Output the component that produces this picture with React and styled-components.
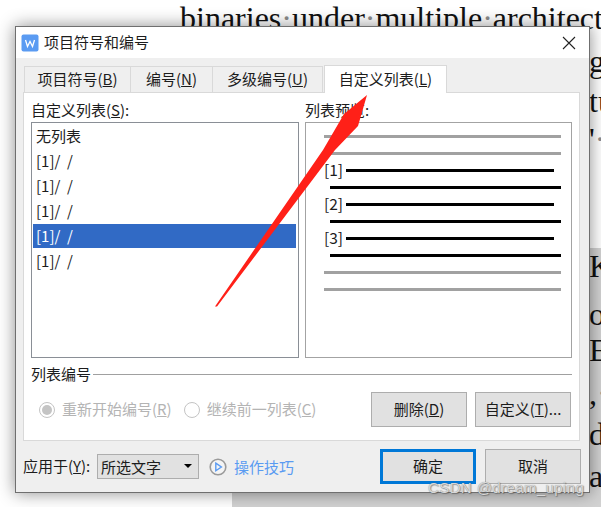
import React from 'react';
import styled, { createGlobalStyle } from 'styled-components';

const Global = createGlobalStyle`
  html, body { margin: 0; padding: 0; background: #fff; }
  * { box-sizing: border-box; }
`;

const Desktop = styled.div`
  position: relative;
  width: 601px;
  height: 507px;
  overflow: hidden;
  background: #fff;
  font-family: "Noto Sans CJK SC", "Liberation Sans", sans-serif;
  font-size: 15px;
  color: #1c1c1c;
`;

const GreyArea = styled.div`
  position: absolute;
  left: 232px;
  top: 248px;
  right: 0;
  bottom: 0;
  background: #d2d2d2;
`;

const DocText = styled.div`
  position: absolute;
  left: ${p => p.$left}px;
  top: ${p => p.$top}px;
  font-family: "Liberation Serif", serif;
  font-size: 32px;
  line-height: 34px;
  white-space: pre;
  color: #111;
`;

const Dot = styled.span`
  color: #8c8c8c;
`;

const Dialog = styled.div`
  position: absolute;
  left: 15px;
  top: 26px;
  width: 575px;
  height: 467px;
  display: flex;
  flex-direction: column;
  background: #efefef;
  border: 1px solid #6f6f6f;
  box-shadow: 0 0 16px rgba(0, 0, 0, 0.45);
`;

const TitleBar = styled.div`
  height: 31px;
  display: flex;
  align-items: center;
  padding: 0 13px 0 5px;
  background: #fff;
`;

const Title = styled.div`
  margin-left: 5px;
  padding-bottom: 2px;
  flex: 1;
`;

const Body = styled.div`
  flex: 1;
  padding: 7px 9px 0 7px;
`;

const TabStrip = styled.div`
  display: flex;
  align-items: flex-end;
  height: 28px;
  padding-left: 1px;
  position: relative;
  z-index: 1;
`;

const Tab = styled.div`
  width: ${p => p.$width}px;
  height: ${p => (p.$active ? 28 : 27)}px;
  display: flex;
  align-items: center;
  justify-content: center;
  padding-bottom: 2px;
  background: ${p => (p.$active ? '#fff' : '#efefef')};
  border: 1px solid #d9d9d9;
  border-bottom: ${p => (p.$active ? 'none' : '1px solid #d9d9d9')};
  margin-left: ${p => (p.$active ? 1 : 0)}px;
  border-left: ${p => (p.$first || p.$active ? '1px solid #d9d9d9' : 'none')};
`;

const Panel = styled.div`
  height: 349px;
  margin-top: -1px;
  padding: 0 7px;
  background: #fff;
  border: 1px solid #d9d9d9;
`;

const Columns = styled.div`
  display: grid;
  grid-template-columns: 268px 267px;
  column-gap: 6px;
  padding-top: 7px;
`;

const Column = styled.div`
  display: flex;
  flex-direction: column;
`;

const FieldLabel = styled.div`
  height: 22px;
  line-height: 20px;
`;

const ListBox = styled.div`
  height: 236px;
  display: flex;
  flex-direction: column;
  gap: 1px;
  padding: 1px 2px 0 1px;
  border: 1px solid #8a8f96;
`;

const ListRow = styled.div`
  height: 24px;
  line-height: 24px;
  padding-left: 3px;
  white-space: pre;
  background: ${p => (p.$selected ? '#316ac5' : 'transparent')};
  color: ${p => (p.$selected ? '#fff' : '#1c1c1c')};
`;

const PreviewBox = styled.div`
  height: 236px;
  padding: 5px 10px 0 18px;
  border: 1px solid #a3a3a3;
`;

const PreviewRow = styled.div`
  height: 17px;
  display: flex;
  align-items: center;
  padding-left: ${p => p.$indent || 0}px;
  padding-right: ${p => p.$trim || 0}px;
`;

const PreviewNumber = styled.span`
  width: 22px;
  flex: none;
  line-height: 15px;
  margin-bottom: 2px;
  font-size: 15.5px;
`;

const PreviewBar = styled.div`
  flex: 1;
  height: 3px;
  background: ${p => (p.$muted ? '#a1a1a1' : '#000')};
`;

const GroupHead = styled.div`
  display: flex;
  align-items: flex-start;
  gap: 2px;
  height: 18px;
  margin-top: 7px;
  line-height: 18px;
`;

const GroupRule = styled.div`
  flex: 1;
  height: 1px;
  margin-top: 9px;
  background: #a0a0a0;
`;

const GroupRow = styled.div`
  display: flex;
  align-items: center;
  height: 35px;
  margin-top: 9px;
  padding-right: 1px;
`;

const RadioItem = styled.div`
  display: flex;
  align-items: center;
  gap: 7px;
  margin-left: ${p => p.$offset}px;
  color: #b4b4b4;
`;

const RadioLabel = styled.span`
  padding-bottom: 2px;
`;

const RadioMark = styled.span`
  width: 16px;
  height: 16px;
  flex: none;
  display: flex;
  align-items: center;
  justify-content: center;
  border: 1px solid #c4c4c4;
  border-radius: 50%;
  background: #fff;
  &::after {
    content: "";
    width: 10px;
    height: 10px;
    border-radius: 50%;
    background: ${p => (p.$checked ? '#c4c4c4' : 'transparent')};
  }
`;

const ButtonRow = styled.div`
  display: flex;
  gap: 8px;
  margin-left: auto;
`;

const Button = styled.div`
  width: 96px;
  height: 35px;
  display: flex;
  align-items: center;
  justify-content: center;
  padding-bottom: 2px;
  background: #e1e1e1;
  border: ${p => (p.$primary ? '3px solid #0078d7' : '1px solid #adadad')};
`;

const Footer = styled.div`
  display: flex;
  align-items: center;
  height: 35px;
  margin: 8px -1px 0 0;
`;

const SelectLabel = styled.div`
  width: 74px;
  padding-bottom: 2px;
`;

const SelectBox = styled.div`
  width: 102px;
  height: 25px;
  display: flex;
  align-items: center;
  justify-content: space-between;
  padding: 0 6px 1px 3px;
  background: #e1e1e1;
  border: 1px solid #adadad;
`;

const Caret = styled.span`
  width: 0;
  height: 0;
  border-left: 4px solid transparent;
  border-right: 4px solid transparent;
  border-top: 4px solid #000;
`;

const TipLink = styled.div`
  display: flex;
  align-items: center;
  gap: 7px;
  margin-left: 10px;
  color: #5a9bf2;
`;

const FooterButtons = styled.div`
  display: flex;
  gap: 9px;
  margin-left: auto;
`;

const Arrow = styled.svg`
  position: absolute;
  left: 0;
  top: 0;
  pointer-events: none;
`;

const Watermark = styled.div`
  position: absolute;
  left: 428px;
  top: 478px;
  font-family: "Liberation Sans", sans-serif;
  font-size: 15px;
  line-height: 20px;
  letter-spacing: 0.4px;
  color: #d8d8d8;
  text-shadow: 0 0 1px rgba(80, 80, 80, 0.6), 1px 1px 1px rgba(70, 70, 70, 0.5);
  white-space: nowrap;
`;

const AppLogo = () => (
  <svg width="18" height="18" viewBox="0 0 18 18">
    <rect x="0.5" y="0.5" width="17" height="17" rx="2" fill="#5a9bf2" />
    <path d="M4.5 6 L6.5 12.5 L9 7.5 L11.5 12.5 L13.5 6" fill="none" stroke="#fff" strokeWidth="1.3" />
  </svg>
);

const CloseIcon = () => (
  <svg width="14" height="14" viewBox="0 0 14 14">
    <path d="M1 1 L13 13 M13 1 L1 13" stroke="#222" strokeWidth="1.1" />
  </svg>
);

const TipIcon = () => (
  <svg width="18" height="18" viewBox="0 0 18 18">
    <circle cx="9" cy="9" r="7.8" fill="#f4f4f4" stroke="#9a9a9a" strokeWidth="1.6" />
    <path d="M6.8 5.2 L12.4 9 L6.8 12.8 Z" fill="none" stroke="#5a9bf2" strokeWidth="1.4" />
  </svg>
);

const listRows = ['[1]/  /', '[1]/  /', '[1]/  /', '[1]/  /', '[1]/  /'];

export default function App() {
  return (
    <Desktop>
      <Global />
      <GreyArea />
      <DocText $left={180} $top={1}>
        binaries<Dot>·</Dot>under<Dot>·</Dot>multiple<Dot>·</Dot>architect
      </DocText>
      <DocText $left={589} $top={44}>g</DocText>
      <DocText $left={589} $top={84}>tu</DocText>
      <DocText $left={589} $top={122}>'<Dot>·</Dot></DocText>
      <DocText $left={589} $top={249}>K.</DocText>
      <DocText $left={589} $top={297}>o</DocText>
      <DocText $left={589} $top={333}>E</DocText>
      <DocText $left={589} $top={376}>,<Dot>·</Dot></DocText>
      <DocText $left={589} $top={417}>d<Dot>·</Dot></DocText>
      <DocText $left={589} $top={459}>ac</DocText>

      <Dialog>
        <TitleBar>
          <AppLogo />
          <Title>项目符号和编号</Title>
          <CloseIcon />
        </TitleBar>
        <Body>
          <TabStrip>
            <Tab $width={107} $first>项目符号(<u>B</u>)</Tab>
            <Tab $width={82}>编号(<u>N</u>)</Tab>
            <Tab $width={110}>多级编号(<u>U</u>)</Tab>
            <Tab $width={123} $active>自定义列表(<u>L</u>)</Tab>
          </TabStrip>
          <Panel>
            <Columns>
              <Column>
                <FieldLabel>自定义列表(<u>S</u>):</FieldLabel>
                <ListBox>
                  <ListRow>无列表</ListRow>
                  {listRows.map((text, i) => (
                    <ListRow key={i} $selected={i === 3}>{text}</ListRow>
                  ))}
                </ListBox>
              </Column>
              <Column>
                <FieldLabel>列表预览:</FieldLabel>
                <PreviewBox>
                  <PreviewRow><PreviewBar $muted /></PreviewRow>
                  <PreviewRow><PreviewBar $muted /></PreviewRow>
                  {[1, 2, 3].map(n => (
                    <React.Fragment key={n}>
                      <PreviewRow $trim={7}>
                        <PreviewNumber>[{n}]</PreviewNumber>
                        <PreviewBar />
                      </PreviewRow>
                      <PreviewRow $indent={6}><PreviewBar /></PreviewRow>
                    </React.Fragment>
                  ))}
                  <PreviewRow><PreviewBar $muted /></PreviewRow>
                  <PreviewRow><PreviewBar $muted /></PreviewRow>
                </PreviewBox>
              </Column>
            </Columns>
            <GroupHead>
              列表编号
              <GroupRule />
            </GroupHead>
            <GroupRow>
              <RadioItem $offset={8}>
                <RadioMark $checked />
                <RadioLabel>重新开始编号(<u>R</u>)</RadioLabel>
              </RadioItem>
              <RadioItem $offset={12}>
                <RadioMark />
                <RadioLabel>继续前一列表(<u>C</u>)</RadioLabel>
              </RadioItem>
              <ButtonRow>
                <Button>删除(<u>D</u>)</Button>
                <Button>自定义(<u>T</u>)...</Button>
              </ButtonRow>
            </GroupRow>
          </Panel>
          <Footer>
            <SelectLabel>应用于(<u>Y</u>):</SelectLabel>
            <SelectBox>
              所选文字
              <Caret />
            </SelectBox>
            <TipLink>
              <TipIcon />
              操作技巧
            </TipLink>
            <FooterButtons>
              <Button $primary>确定</Button>
              <Button>取消</Button>
            </FooterButtons>
          </Footer>
        </Body>
      </Dialog>

      <Arrow width="601" height="507" viewBox="0 0 601 507">
        <polygon points="215,306.5 323,150 344,114 367,95 358,126 335,150 217,306.5" fill="#ff2018" />
      </Arrow>
      <Watermark>CSDN @dream_uping</Watermark>
    </Desktop>
  );
}
